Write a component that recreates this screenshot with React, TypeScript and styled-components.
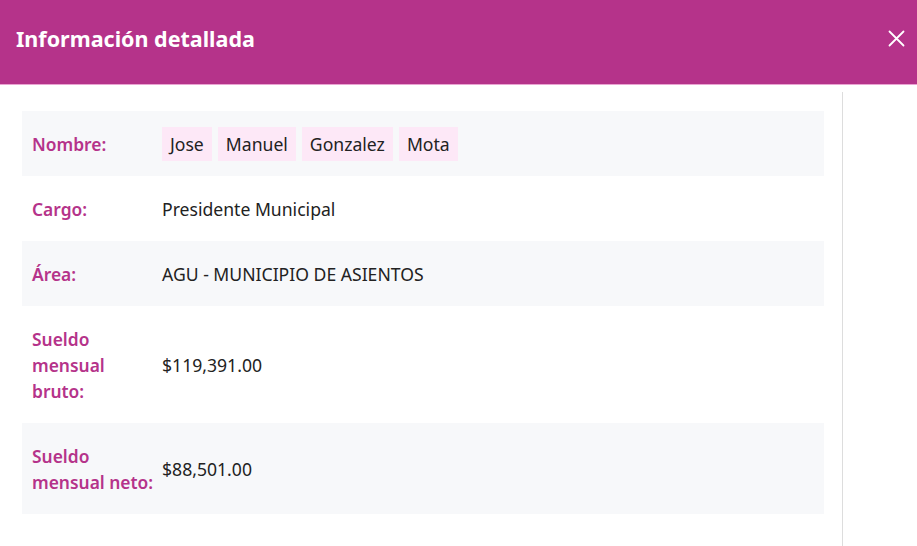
import styled, { createGlobalStyle } from "styled-components";

const GlobalStyle = createGlobalStyle`
  html, body {
    margin: 0;
    padding: 0;
    background: #fff;
  }
  body {
    font-family: "Noto Sans", "Open Sans", sans-serif;
    color: #212529;
  }
`;

type Row = { label: string; value: string | string[] };

const rows: Row[] = [
  { label: "Nombre:", value: ["Jose", "Manuel", "Gonzalez", "Mota"] },
  { label: "Cargo:", value: "Presidente Municipal" },
  { label: "Área:", value: "AGU - MUNICIPIO DE ASIENTOS" },
  { label: "Sueldo mensual bruto:", value: "$119,391.00" },
  { label: "Sueldo mensual neto:", value: "$88,501.00" },
];

function App() {
  return (
    <>
      <GlobalStyle />
      <Modal>
        <Header>
          <Title>Información detallada</Title>
          <CloseBtn aria-label="Cerrar">
            <svg width="17" height="17" viewBox="0 0 17 17">
              <path
                d="M1.5 1.5 L15.5 15.5 M15.5 1.5 L1.5 15.5"
                stroke="#fff"
                strokeWidth="1.8"
                strokeLinecap="round"
              />
            </svg>
          </CloseBtn>
        </Header>
        <Body>
          <Content>
            <Table>
              <tbody>
                {rows.map((r, i) => (
                  <Tr key={r.label} $striped={i % 2 === 0}>
                    <Label>{r.label}</Label>
                    <Value>
                      {Array.isArray(r.value)
                        ? r.value.map((p) => <Chip key={p}>{p}</Chip>)
                        : r.value}
                    </Value>
                  </Tr>
                ))}
              </tbody>
            </Table>
          </Content>
        </Body>
      </Modal>
    </>
  );
}

export default App;

const Modal = styled.div`
  width: 917px;
  height: 546px;
  display: flex;
  flex-direction: column;
  overflow: hidden;
`;

const Header = styled.div`
  height: 85px;
  flex-shrink: 0;
  background: #b5338a;
  border-bottom: 1px solid #e9a4d2;
  display: flex;
  align-items: center;
  justify-content: space-between;
  padding: 0 10px 8px 16px;
  box-sizing: border-box;
`;

const Title = styled.h2`
  margin: 0;
  font-family: "Noto Sans", sans-serif;
  font-weight: 700;
  font-size: 21.5px;
  color: #fff;
`;

const CloseBtn = styled.button`
  background: none;
  border: none;
  padding: 0;
  width: 17px;
  height: 17px;
  cursor: pointer;
  display: flex;
  margin-right: 2px;
`;

const Body = styled.div`
  flex: 1;
  display: flex;
  padding-top: 7px;
`;

const Content = styled.div`
  width: 843px;
  border-right: 1px solid #dddddd;
  padding: 19px 19px 0 22px;
  box-sizing: border-box;
`;

const Table = styled.table`
  width: 802px;
  border-collapse: collapse;
  font-size: 17.6px;
  line-height: 26px;
`;

const Tr = styled.tr<{ $striped: boolean }>`
  background: ${(p) => (p.$striped ? "#f7f8fa" : "#fff")};
`;

const Label = styled.td`
  width: 122px;
  padding: 19.5px 8px 19.5px 10px;
  font-weight: 600;
  font-size: 17.4px;
  color: #b5338a;
  vertical-align: middle;
`;

const Value = styled.td`
  padding: 19.5px 10px 19.5px 0;
  color: #222;
  vertical-align: middle;
`;

const Chip = styled.span`
  display: inline;
  background: #fde8f7;
  padding: 5px 8px;
  margin-right: 6px;
`;
